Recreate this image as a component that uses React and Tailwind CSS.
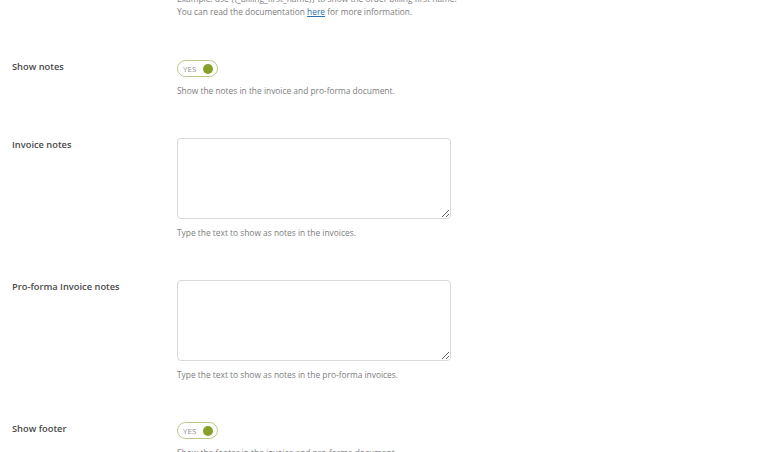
import React from "react";

function Toggle() {
  return (
    <div className="flex h-[17px] w-[41px] items-center justify-between rounded-full border-[1.5px] border-[#bcc783] bg-white pl-[5px] pr-[4px]">
      <span className="text-[8px] leading-none text-[#909090]">YES</span>
      <span className="h-[10px] w-[10px] rounded-full bg-[#86a02a]" />
    </div>
  );
}

function Row({ label, children, help }) {
  return (
    <div className="flex">
      <div className="w-[177px] shrink-0 pl-[12px] text-[9.3px] font-semibold leading-[13px] text-[#4a4a4a]">
        {label}
      </div>
      <div className="flex flex-col">
        {children}
        <div className="mt-[7px] text-[8.4px] leading-[13px] text-[#7d7d7d]">{help}</div>
      </div>
    </div>
  );
}

function Area() {
  return (
    <textarea className="h-[81px] w-[274px] rounded-[4px] border border-[#d9d9d9] bg-white outline-none" />
  );
}

export default function App() {
  return (
    <div
      className="h-[452px] w-[769px] overflow-hidden bg-white"
      style={{ fontFamily: '"Open Sans", "Noto Sans", sans-serif' }}
    >
      <div className="-mt-[8px] pl-[177px] text-[8.4px] leading-[13px] text-[#7d7d7d]">
        <div>Example: use {"{{_billing_first_name}}"} to show the order billing first name.</div>
        <div>
          You can read the documentation{" "}
          <span className="text-[#2f6fb0] underline">here</span> for more information.
        </div>
      </div>
      <div className="mt-[42px] flex flex-col gap-[41px]">
        <Row label="Show notes" help="Show the notes in the invoice and pro-forma document.">
          <Toggle />
        </Row>
        <Row label="Invoice notes" help="Type the text to show as notes in the invoices.">
          <Area />
        </Row>
        <Row label="Pro-forma Invoice notes" help="Type the text to show as notes in the pro-forma invoices.">
          <Area />
        </Row>
        <Row label="Show footer" help="Show the footer in the invoice and pro-forma document.">
          <Toggle />
        </Row>
      </div>
    </div>
  );
}
